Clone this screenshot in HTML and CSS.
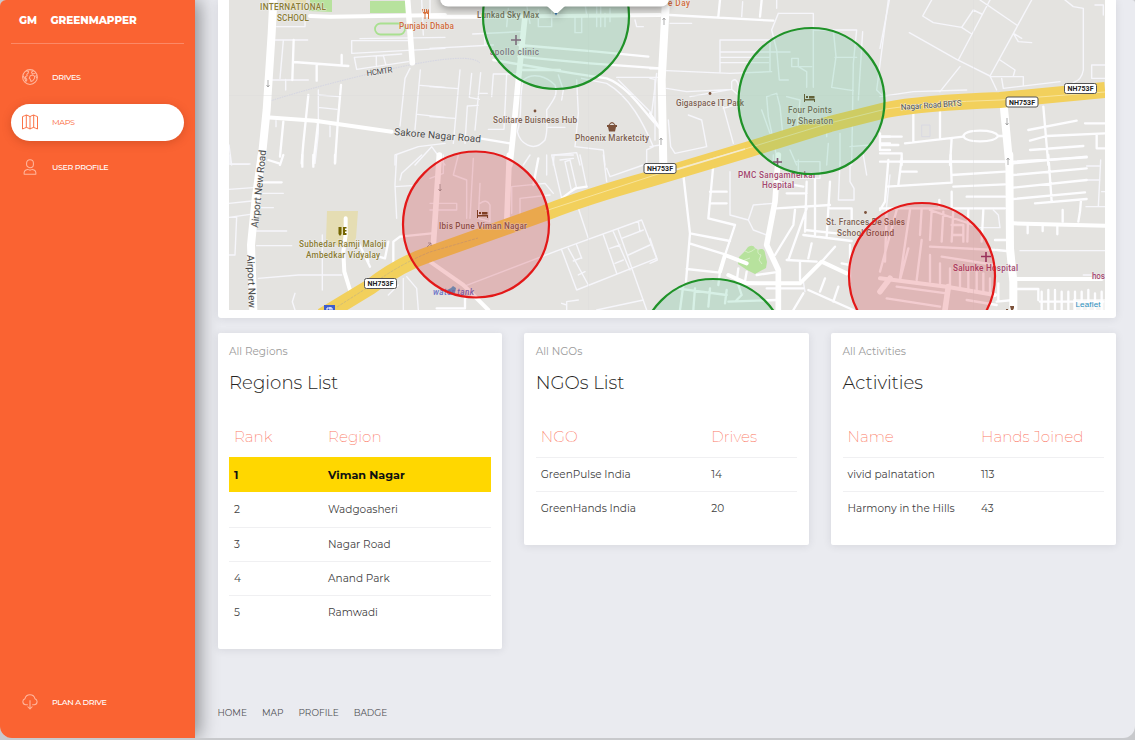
FILE: index.html
```html
<!DOCTYPE html>
<html lang="en">
<head>
<meta charset="utf-8">
<title>GreenMapper</title>
<link rel="stylesheet" href="styles.css">
</head>
<body>
<div class="app">
  <aside class="sidebar">
    <div class="brand"><span class="brand-short">GM</span><span class="brand-name">GREENMAPPER</span></div>
    <nav class="nav">
      <a class="nav-item"><svg class="icon" viewBox="0 0 16 16"><circle cx="8" cy="8" r="7.400"/><path d="M4.200 1.800 6.500 2.600 6.200 4.200 4.800 5.400 5.200 6.700 3.400 7.600 3.800 9.200 4.800 10.400 4.600 12 3.800 12.200 2.800 9.400 1 7M8.300 6.800 10.600 6 12.500 7.100 12.600 9.300 10.800 11.800 9 12.500 8.400 10.400 7.200 9.200ZM11.400 1.700 9.500 3.200 10.300 4.800 12.800 4.500 13.800 3.500M14.600 6 13.800 7 15 9.200"/></svg><span>DRIVES</span></a>
      <a class="nav-item active"><svg class="icon" viewBox="0 0 16 16"><path d="M.5 2.600Q2.500 1.800 4.300 1 6 1.400 8 2.600 10 1.400 11.700 1 13.500 1.800 15.500 2.600V15Q13.500 14.200 11.700 13.400 10 13.800 8 15 6 13.800 4.300 13.400 2.500 14.200.5 15ZM4.300 1V13.400M8 2.600V15M11.700 1V13.400"/></svg><span>MAPS</span></a>
      <a class="nav-item"><svg class="icon" viewBox="0 0 16 16"><rect x="4.600" y=".7" width="6.800" height="8" rx="3.300"/><path d="M2.100 15.200C1.800 12.200 3.800 10.600 5.700 10.400 7 11.200 9 11.200 10.300 10.400 12.200 10.600 14.200 12.200 13.900 15.200Z"/></svg><span>USER PROFILE</span></a>
    </nav>
    <a class="nav-item plan"><svg class="icon" viewBox="0 0 16 16"><path d="M5.800 10.800H3.700A3.100 3.100 0 0 1 2.900 4.800 5.200 5.200 0 0 1 13 4.800 3.100 3.100 0 0 1 12.300 10.800H10.200M8 6.300V14.800M5.600 12.500 8 15 10.400 12.500"/></svg><span>PLAN A DRIVE</span></a>
  </aside>

  <main class="main">
    <section class="card map-card">
      <div class="map">
      <svg class="map-svg" viewBox="229 0 876 310">
        <rect class="land" x="229" y="0" width="876" height="310"/>
        <!-- parks and school grounds -->
        <path class="park" d="M310 0H332V12L309 11ZM370 1H406V13H370Z"/>
        <path class="park" d="M739 257 745 251 748 247Q753 244 755 248L758 250Q764 247 765 253L767 262 766 268 755 274 747 270 738 264Z"/>
        <path class="park-line" d="M745 251q3 3 7 0t3-2M740 262l10-4M758 250q-1 4 3 5l-2 5 3 4"/>
        <path class="school" d="M284 0H306V10H290ZM327 211H358L356 238Q352 250 338 246L326 240Z"/>
        <rect class="track" x="375" y="23.500" width="30" height="11" rx="5.500"/>
        <path class="boundary" d="M270 101Q330 82 400 67T480 63"/>

        <g transform="translate(215 0) scale(.33333)">
          <path class="r1" d="M165 120H278M205 122 195 235M185 80H270V60M165 240H280M212 270V238M310 270V400L300 490M312 285 372 290M310 322 366 328M345 378V410M183 362V380M410 122V160L690 145M435 116 690 112M410 122 590 122M418 172 425 208 580 185M418 172 560 162M484 168V196M505 166 512 192M585 205 570 235 555 378M616 210 600 388M616 256 690 262M608 343 690 352M42 435 50 495M45 492H105M540 495V465L610 440 690 430M600 495 650 440 690 495M620 0 625 105M645 0V40"/>
          <path class="r2" d="M236 120 232 240M236 186 400 198M380 165V192M305 195V242M280 285 265 430 260 490M378 255 368 370 360 490M310 360 295 490M205 365 195 470M160 480 192 490"/>
          <path class="r3" d="M285 48 345 50 690 45M155 352 300 362 530 395"/>
          <path class="r4" d="M578 0 592 188"/>
          <path class="r5" d="M175 0 170 100 155 330 138 495"/>
        </g>
        <g transform="translate(430 0) scale(.33333)">
          <path class="r1" d="M0 145 190 135M0 260 85 266M0 350 75 355M90 210 70 430M125 220 118 292 148 298M152 218 135 390M150 280H172M185 290 190 222H265M112 318 145 316M112 318 105 430M175 388H222L230 222M235 25 230 80M160 40 165 135M128 102 275 95M280 240C265 290 280 340 262 395 270 430 310 460 345 420 355 390 350 355 350 330 370 300 385 285 375 255 350 230 310 215 280 240M385 225 400 270 395 300M440 240 445 340 435 440M455 235 530 250C600 290 640 370 670 440L650 450V495M565 240 665 340 680 220M560 232H690M300 70 290 15M325 80H365V30M325 80V30M435 50V98H455V50M465 10 470 45M500 20V80M512 20V80M525 40V80M540 25V65M615 60 620 80H640M355 382H405M370 495 372 465 440 458 450 495M390 480 430 475M435 440 520 450 525 495"/>
          <path class="r2" d="M265 135 500 155 655 170M265 170 480 190 690 205M190 180 430 220 530 235C600 260 650 350 690 385M150 415 240 430M270 210H390"/>
          <path class="r3" d="M0 50 140 50 690 45"/>
          <path class="r4" d="M285 50 265 240 250 400 240 495"/>
        </g>
        <g transform="translate(650 0) scale(.33333)">
          <path class="r1" d="M60 70H125M278 5 275 50M380 0V25M385 40H490V262M385 40 365 90 380 150 388 240H415M490 90H620L610 190 605 495M550 90 558 170 545 262 610 272M555 172H620M638 95 625 300M715 0 680 270 695 285M210 120H360M210 120V215M210 156H420M210 172H360M210 188H355M360 120V215M50 212 240 220 365 215M50 265 110 275 245 268M245 268V245Q258 230 265 255V285L245 268M120 290 245 268M220 320 250 430M115 345 155 360 170 440 75 460 62 440 55 360M220 325 270 310M350 290 380 280 390 320 398 400M350 290 355 350 380 470M0 235 15 238V420M0 440 30 435M335 330 360 400M425 175 445 175V200L470 215V262M425 175V200H485M410 290 450 300 440 410M530 350V410M570 400V495M600 440 660 435M420 450 440 495M535 430 530 495"/>
          <path class="r2" d="M0 205H40M0 340 30 385M60 45 370 62M210 0 205 50M335 0 330 50M690 400V450M690 430H720M690 410H720M690 450H720"/>
          <path class="r5" d="M48 0 35 240 40 495"/>
        </g>
        <g transform="translate(880 0) scale(.33333)">
          <path class="r1" d="M28 0 0 145M155 0 128 48 160 68 245 82 275 102M245 82 280 30 305 42M330 0 235 180M455 0 330 228M300 0 410 75M88 98 230 178 330 228 350 270M240 200 180 275M360 180 405 210 400 228M330 230H430V255M365 235 370 265 540 245M400 100 415 125 455 128M400 100 425 115M555 0 580 20 610 25V210Q605 240 580 248M645 15H670V45M635 195H675M635 195V235H675M0 290 100 275 260 270"/>
          <path class="faint" d="M125 375H150V410H125Z"/>
          <path class="r2" d="M100 340V425M180 335V415M75 430 250 410M355 408H375M215 415 210 495M0 410H65M0 435H55M0 460H65V495M400 485 620 472M445 390 590 362M450 422 500 408 675 400M450 450 610 438M490 320 505 495M615 370H675M650 405V445H675M0 485H375"/>
          <path class="r2" d="M250 408Q255 392 300 392T355 408Q345 424 300 424T250 408"/>
          <path class="r5" d="M372 325 388 495"/>
        </g>
        <g transform="translate(215 155) scale(.33333)">
          <path class="r1" d="M42 103 115 98M42 145 110 138M42 187 105 178M65 185 60 300H42M45 0V28H100M125 228H215M125 272H230M125 158H175M130 115H205M130 370 250 360H380M322 240V405M240 415 232 440 240 465M545 0 540 90 545 190M540 95 590 92M620 0 560 55 555 75M565 370V465M575 365 605 400 610 465M520 420 550 390"/>
          <path class="r2" d="M130 82H200M205 0 195 30M262 0V35M295 0V35M360 0V25M460 320 455 295 510 310 520 260M535 320V260L555 245 650 235M430 262 465 335"/>
          <path class="r3" d="M392 190V240L385 290 388 350 405 405"/>
          <path class="r5" d="M140 0 122 130 108 270 115 465"/>
        </g>
        <g transform="translate(430 155) scale(.33333)">
          <path class="r1" d="M0 145H80V165H0M40 0V55L0 70M85 0 70 60 110 75V190M130 10 120 190M150 85 145 190 180 200V150Q170 130 150 145M245 175V95L345 85 370 115M270 180V130L360 120M100 395 400 280 635 195 680 310 440 405 395 285M415 280 475 390M440 270 455 310M520 240 560 355M550 230 600 345M565 225 650 465M575 250 640 225M595 300 660 270M540 280 570 270M555 325 580 315M430 318 455 308M445 360 465 350M625 200 630 230M445 160 475 250M395 130 365 0 430 0M405 20 425 110 440 100 420 15 405 20M450 0 470 95M520 0 530 80M530 40 540 65 640 30M500 465 640 435M410 465V440L445 435M395 445 410 450M300 0 280 30M350 0V60"/>
          <path class="r2" d="M325 10 310 90M395 130 435 100 470 95M20 460H105V430"/>
          <path class="r4" d="M28 0 10 270M238 0 230 210"/>
          <path class="r3" d="M0 320 100 390 175 465"/>
        </g>
        <g transform="translate(650 155) scale(.33333)">
          <path class="r1" d="M0 250 22 315 0 325M240 50V180L295 195 310 150 370 145M295 195 310 225 350 240M570 20 565 135H612V100L600 80V20M435 20H510V70H440M445 15V70M640 0 650 60M720 60 705 200M460 380 465 410M370 0V30"/>
          <path class="r2" d="M100 60 120 235 108 380M190 30 175 190 255 210 225 300 260 315M180 110H230M185 145H230M120 235 240 258M118 265 225 298M110 342 210 353M205 390 210 350M380 160 540 150M470 80 465 230M495 70V240M540 80 530 245M375 80 460 95M410 115H470M435 165 430 210 375 300M470 160 415 315M540 160H605V200M460 240 605 258M465 225 560 235M410 315 500 320M450 320V375M485 265 475 310M555 275 515 320M265 340 260 380M260 380 340 385M235 440 380 435M265 390 275 420 260 435M320 360 375 352M350 400H460M475 405 610 465M525 370 510 410M565 395 550 440M460 415 430 465M575 325 600 330M600 270V380M80 400 230 420M100 390 90 465M135 400 130 465M180 400 175 455M230 405 225 445M290 350 285 380"/>
          <path class="r3" d="M225 300 290 325M225 300 210 350M235 360 290 385H450L515 320 590 355"/>
          <path class="r4" d="M385 0 375 140 350 270 385 345V465"/>
        </g>
        <g transform="translate(880 155) scale(.33333)">
          <path class="r1" d="M340 165 355 180 360 218H300M420 287H675M620 33H660M620 75H660M662 15 655 155M618 155H675M610 360H640M665 110H675"/>
          <path class="r2" d="M25 15 15 140 0 165M60 20H375M65 10 55 90M65 50H110M20 95 215 83 212 0M215 60 375 50M220 95 375 88M260 125H375M215 110V155M178 135V155M0 160H375M310 165 305 260M400 25 620 5M400 60 620 40M400 98 620 75M400 132 615 112M505 0 515 140M465 145 620 132M603 135 600 170 595 200M548 165V200M443 210V235M488 210V228M532 210V238M345 255H380M350 285 380 288M350 440 400 435M410 402H475V435M485 410V465M505 405V465M525 405V465M545 410V465M565 410V465M585 410V465M605 410V465M625 405V465M645 415V465M665 410V465M480 440H670M355 385V440M125 160 120 240M155 165 150 255M190 170 185 260M220 165 215 260M265 165 262 260M150 165 280 210M215 210H250V260M220 240H245M90 165 60 370M50 165 0 350M125 255 110 375M85 280 60 375M150 275 345 285M185 305 345 330M150 300V380M180 325V385M210 340V400M240 340V400M265 345V410M290 350V410M310 355V415M330 370V420M50 395 200 415M20 430 180 455M260 435 350 450M20 170 15 320"/>
          <path class="r3" d="M400 205 675 212M410 372H665M0 370 200 395 345 420"/>
          <path class="r4" d="M205 395 195 465M30 370 0 410"/>
          <path class="r5" d="M388 0 390 280 400 380V465"/>
        </g>

        <path class="tile" d="M229 95.500H1105M588.500 0V310M973.500 0V310"/>
        <path class="highway" d="M322 316 370 287Q400 264 430 254L545 213Q585 197 650 179L750 149 830 124 886 110Q920 103 1000 100L1105 90"/>
        <path class="median-grey" d="M337 307 370 286Q400 264 430 252L478 238"/>
        <path class="median" d="M545 211 655 175 745 149 830 123 886 109Q930 102 1000 100L1105 92"/>
        <path class="median wide" d="M672 171 745 149"/>

        <g class="arrows"><path d="M268 80v7m-1.500-2 1.500 2 1.500-2M440 184v7m-1.500-2 1.500 2 1.500-2M664 18v7m-1.500-5 1.500-2 1.500 2M661 138v7m-1.500-5 1.500-2 1.500 2M1007 118v7m-1.500-2 1.500 2 1.500-2M1008 158v7m-1.500-5 1.500-2 1.500 2M427 247l4-4m-3 0h3v3"/></g>

        <!-- place icons -->
        <path fill="#d8703a" d="M422 9h1v3h1v-3h1v3h1v-3h1v4l-1.500 1v5h-1v-5l-1.500-1zM429 19v-10q-2 1-2 5h1v5z"/>
        <path stroke="#8d5a7c" stroke-width="1.600" d="M511 40h10M516 35v10"/>
        <path stroke="#8d3a6c" stroke-width="1.600" d="M773 162h9M777.500 158v9M981 256.500h10M986 252v10"/>
        <path class="bed" d="M804 94h1v5h10v3h-1v-1.500h-9v1.500h-1zM809 96h5.500v2.500h-5.500zM806 96h2v2h-2z"/>
        <path class="bed" d="M477 210h1v5h10v3h-1v-1.500h-9v1.500h-1zM482 212h5.500v2.500h-5.500zM479 212h2v2h-2z"/>
        <path fill="#7b513a" d="M607 125h10v2h-1l-1 4.500h-6l-1-4.500h-1zM608.500 125q3.500-6 7 0h-1q-2.500-3.500-5 0z"/>
        <g fill="#7b513a"><circle cx="535" cy="111" r="1.400"/><circle cx="710" cy="93.500" r="1.400"/><circle cx="865.500" cy="212.500" r="1.400"/><path d="M1010 306h4v2l-1 2h-2zM1006 309h2v1h-2z"/></g>
        <path fill="#756600" d="M338.500 227h3v7l-1.500 2-1.500-2zM343 227h3.500v1.500h-1.500v1.500h1.500v1.500h-1.500v1.500h1.500v2h-3.500z"/>
        <path fill="#5ba2cf" d="M447 290l4-2 2-2 3 2-1 5-4 2-3-2z"/>
        <rect x="324" y="305" width="11" height="6" fill="#3f5dcc"/><path d="M327 310v-2h5v2M330 307v3" stroke="#fff" fill="none"/>

        <!-- place names -->
        <g class="lbl olive"><text x="260" y="10" textLength="66">INTERNATIONAL</text><text x="277" y="21" textLength="32">SCHOOL</text><text x="299" y="247" textLength="87">Subhedar Ramji Maloji</text><text x="306" y="258" textLength="74">Ambedkar Vidyalay</text></g>
        <g class="lbl orange"><text x="399" y="29" textLength="55">Punjabi Dhaba</text><text x="668" y="6" textLength="22">e Day</text></g>
        <g class="lbl brown"><text x="477" y="18" textLength="62">Lunkad Sky Max</text><text x="493" y="123" textLength="84">Solitare Buisness Hub</text><text x="575" y="141" textLength="74">Phoenix Marketcity</text><text x="676" y="106" textLength="68">Gigaspace IT Park</text><text x="788" y="113" textLength="44">Four Points</text><text x="787" y="124" textLength="46">by Sheraton</text><text x="439" y="229" textLength="88">Ibis Pune Viman Nagar</text><text x="826" y="225" textLength="79">St. Frances De Sales</text><text x="837" y="236" textLength="57">School Ground</text></g>
        <g class="lbl plum"><text class="muted" x="490" y="55" textLength="49">apollo clinic</text><text x="738" y="178" textLength="78">PMC Sangamnerkar</text><text x="762" y="188" textLength="32">Hospital</text><text x="953" y="271" textLength="65">Salunke Hospital</text><text x="1092" y="279" textLength="13">hos</text></g>
        <text class="lbl blue" x="433" y="295" textLength="41">water tank</text>
        <g class="lbl road">
          <text transform="translate(367 76) rotate(-8)" textLength="26">HCMTR</text>
          <text class="big" transform="translate(394 135) rotate(5)" textLength="87">Sakore Nagar Road</text>
          <text transform="translate(901 110) rotate(-4)" textLength="61">Nagar Road BRTS</text>
          <text class="big" transform="translate(258 228) rotate(-84)" textLength="78">Airport New Road</text>
          <text class="big" transform="translate(247 255) rotate(88)" textLength="53">Airport New</text>
        </g>
        <g class="shield"><rect x="364.500" y="278.500" width="32" height="10" rx="2"/><rect x="644" y="163.500" width="32" height="10" rx="2"/><rect x="1006" y="97" width="32" height="10" rx="2"/><rect x="1064.500" y="83.500" width="32" height="10" rx="2"/></g>
        <g class="lbl shield-text"><text x="367.500" y="286" textLength="26">NH753F</text><text x="647" y="171" textLength="26">NH753F</text><text x="1009" y="104.500" textLength="26">NH753F</text><text x="1067.500" y="91" textLength="26">NH753F</text></g>

        <!-- region zones -->
        <g class="zone good"><circle cx="556" cy="16" r="73"/><circle cx="811.500" cy="101" r="73"/><circle cx="713" cy="352" r="73"/></g>
        <g class="zone bad"><circle cx="476" cy="224.500" r="73"/><circle cx="922" cy="276" r="73"/></g>
        <rect x="1073" y="299" width="32" height="11" fill="#fff" opacity=".6"/>
        <text class="leaflet" x="1075.500" y="307" textLength="25">Leaflet</text>
        <g class="popup"><rect x="440" y="-30" width="229" height="36.500" rx="8"/><path d="M547 6h18l-9 8.500z"/></g>
        <path d="M554.500 13h3l-1.500 2.500z" fill="#2f6695"/>
      </svg>
      </div>
    </section>

    <div class="cards">
      <section class="card list">
        <p class="sub">All Regions</p><h4 class="title">Regions List</h4>
        <div class="table regions">
          <div class="row head"><span>Rank</span><span>Region</span></div>
          <div class="row top"><span>1</span><span>Viman Nagar</span></div>
          <div class="row"><span>2</span><span>Wadgoasheri</span></div>
          <div class="row"><span>3</span><span>Nagar Road</span></div>
          <div class="row"><span>4</span><span>Anand Park</span></div>
          <div class="row"><span>5</span><span>Ramwadi</span></div>
        </div>
      </section>
      <section class="card list">
        <p class="sub">All NGOs</p><h4 class="title">NGOs List</h4>
        <div class="table ngos">
          <div class="row head"><span>NGO</span><span>Drives</span></div>
          <div class="row"><span>GreenPulse India</span><span>14</span></div>
          <div class="row"><span>GreenHands India</span><span>20</span></div>
        </div>
      </section>
      <section class="card list">
        <p class="sub">All Activities</p><h4 class="title">Activities</h4>
        <div class="table acts">
          <div class="row head"><span>Name</span><span>Hands Joined</span></div>
          <div class="row"><span>vivid palnatation</span><span>113</span></div>
          <div class="row"><span>Harmony in the Hills</span><span>43</span></div>
        </div>
      </section>
    </div>

    <footer class="footer"><a>HOME</a><a>MAP</a><a>PROFILE</a><a>BADGE</a></footer>
  </main>
</div>
</body>
</html>
```
FILE: styles.css
```css
* { box-sizing: border-box; }
body {
  margin: 0;
  background: #c8c9cc;
  font-family: Montserrat, Inter, "Open Sans", sans-serif;
  overflow: hidden;
}
.app {
  display: flex;
  width: 1135px;
  height: 738px;
  background: #eaebf0;
  border-radius: 6px 3px 12px 12px;
  overflow: hidden;
}
.sidebar {
  display: flex;
  flex-direction: column;
  flex: 0 0 195px;
  padding: 0 11px 18px;
  background: #fa6332;
  box-shadow: 4px 0 18px rgba(0, 0, 0, .42);
}
.brand {
  display: flex;
  align-items: center;
  gap: 13.500px;
  height: 44px;
  padding: 0 0 2px 8px;
  border-bottom: 1px solid #fc8966;
  color: #fff;
  font-size: 10.500px;
  font-weight: 800;
}
.brand-short { width: 18px; }
.brand-name { letter-spacing: -.05px; }
.nav {
  display: flex;
  flex-direction: column;
  gap: 8px;
  padding-top: 15px;
}
.nav-item {
  display: flex;
  align-items: center;
  gap: 14px;
  height: 37px;
  padding: 0 11px 1px;
  border-radius: 19px;
  color: #fff;
  font-size: 8px;
  font-weight: 500;
  letter-spacing: -.35px;
  white-space: nowrap;
}
.icon {
  width: 16px;
  height: 16px;
  fill: none;
  stroke: #ffb69d;
  stroke-width: 1.050;
  stroke-linejoin: round;
}
.active {
  background: #fff;
  color: #fa6332;
  font-weight: 400;
  box-shadow: 0 2px 10px rgba(120, 30, 0, .25);
}
.active .icon { stroke: #fa6332; stroke-width: .9; }
.plan { margin-top: auto; padding-bottom: 0; }

.main {
  display: flex;
  flex-direction: column;
  flex: 1;
  padding: 0 19.500px 0 22.500px;
}
.card {
  background: #fff;
  border-radius: 2px;
  box-shadow: 0 1px 9px rgba(35, 35, 60, .1);
}
.map-card { height: 317.500px; padding: 0 10.500px 7.500px 11.500px; border-radius: 0 0 3px 3px; }
.map { height: 310px; overflow: hidden; }
.map-svg { display: block; width: 876px; height: 310px; }

.land { fill: #e4e3e0; }
.park { fill: #b7e29d; }
.park-line { fill: none; stroke: #d6efc5; stroke-width: 1; }
.school { fill: #e5ddb3; }
.track { fill: none; stroke: #a9e090; stroke-width: 1.800; }
.boundary { fill: none; stroke: #d3d4e3; stroke-width: 1; stroke-dasharray: 1.500 1; }
.r1, .r2, .r3, .r4, .r5 { fill: none; stroke: #fff; stroke-linejoin: round; stroke-linecap: round; }
.r1 { stroke: #f6f6fb; stroke-width: 4.200; }
.r2 { stroke: #fdfdff; stroke-width: 7; }
.r3 { stroke-width: 12; }
.r4 { stroke-width: 17; }
.r5 { stroke-width: 24; }
.faint { fill: none; stroke: #d9d9e2; stroke-width: 3; }
.tile { fill: none; stroke: #dcdcdc; stroke-width: .4; }
.highway { fill: none; stroke: #f2d05c; stroke-width: 16; }
.median { fill: none; stroke: #f8e49b; stroke-width: 1; }
.median.wide { stroke: #f3ead0; stroke-width: 1.800; }
.median-grey { fill: none; stroke: #c9b87c; stroke-width: .8; stroke-dasharray: 3 1; }
.arrows { fill: none; stroke: #8c8c8c; stroke-width: .7; }
.bed { fill: #6b4a26; }
.lbl {
  font-family: Roboto, sans-serif;
  font-size: 8.200px;
  font-weight: 500;
  stroke: rgba(240, 240, 238, .75);
  stroke-width: 1.200px;
  paint-order: stroke;
}
.olive { fill: #8a7b32; }
.orange { fill: #d06a3c; }
.brown { fill: #7d6152; }
.plum { fill: #a3466f; }
.muted { fill: #8d6480; }
.blue { fill: #6a72c8; stroke: none; font-style: italic; }
.road { fill: #4a4a4a; font-weight: 400; font-size: 8px; }
.road .big { font-size: 10px; }
.shield rect { fill: #fff; stroke: #555; stroke-width: 1; }
.shield-text { fill: #222; stroke: none; font-size: 7px; font-weight: 700; }
.zone { stroke-width: 2.200; }
.good { fill: rgba(64, 190, 130, .2); stroke: #1f9228; }
.bad { fill: rgba(205, 10, 20, .2); stroke: #e31818; }
.leaflet { fill: #2a8fc0; font: 8px "Liberation Sans", sans-serif; }
.popup { fill: #fff; filter: drop-shadow(0 2px 4px rgba(0, 0, 0, .4)); }

.cards {
  display: grid;
  grid-template-columns: repeat(3, 284.500px);
  justify-content: space-between;
  align-items: start;
  padding-top: 15px;
}
.list { padding: 10.500px 11.500px 20px; }
.sub { margin: 0; color: #9a9a9a; font-size: 10.500px; line-height: 18px; }
.title { margin: 8px 0 0; color: #252422; font-size: 18.200px; font-weight: 300; line-height: 27px; }
.table { margin-top: 20.500px; color: #3f3f3f; font-size: 10.500px; }
.row {
  display: grid;
  align-items: center;
  height: 34.100px;
  border-top: 1px solid #f0f0f2;
}
.regions .row { grid-template-columns: 94px 1fr; }
.ngos .row { grid-template-columns: 170.500px 1fr; }
.acts .row { grid-template-columns: 133.500px 1fr; }
.row span { padding-left: 5px; white-space: nowrap; }
.head { height: 40px; padding-bottom: 0; border: 0; color: #fb7a66; font-size: 15.200px; font-weight: 200; }
.row.top { height: 35.500px; padding-top: 1px; background: #ffd700; border: 0; color: #111; font-size: 11.200px; font-weight: 700; }
.row.top + .row { border-color: transparent; height: 34.500px; }

.footer {
  display: flex;
  gap: 15px;
  margin-top: auto;
  padding-bottom: 18px;
  color: #4f5054;
  font-size: 9px;
  line-height: 14px;
}
```
